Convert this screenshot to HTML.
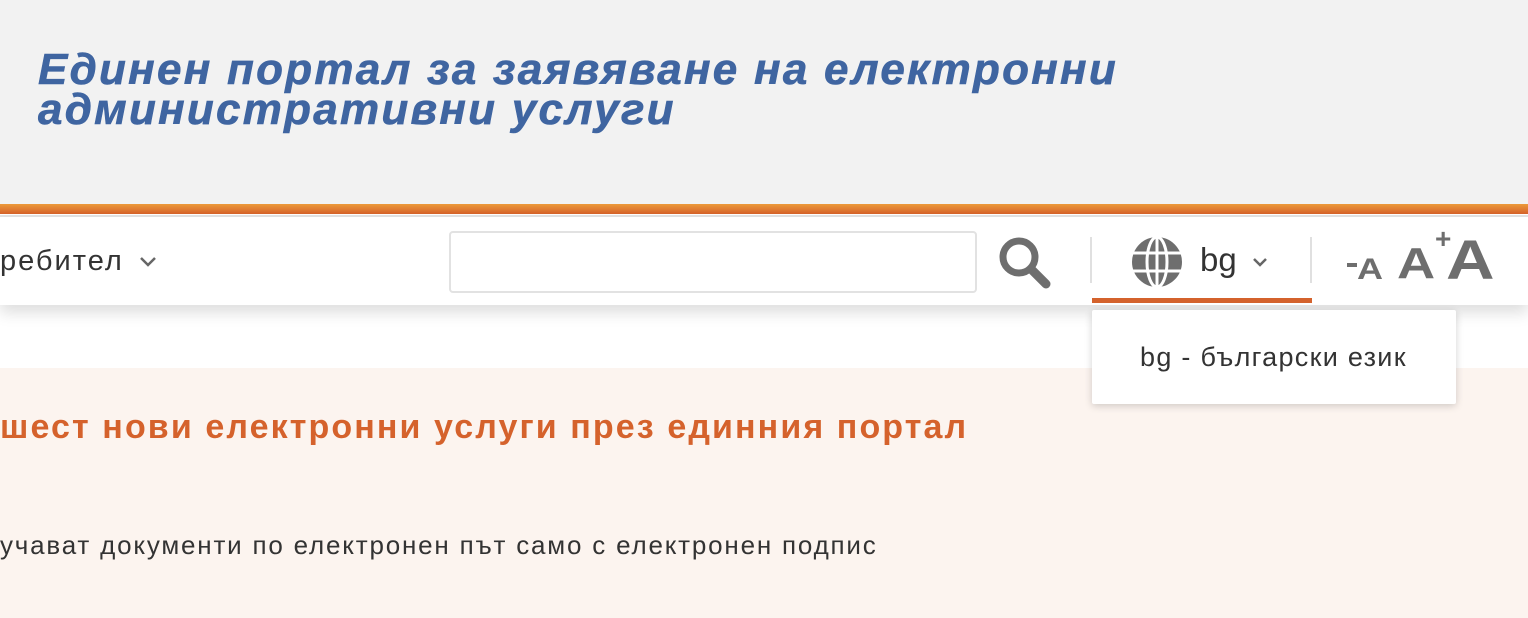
<!DOCTYPE html>
<html><head><meta charset="utf-8"><style>
*{margin:0;padding:0;box-sizing:border-box}
body{width:1528px;height:618px;overflow:hidden;background:#fff;font-family:"Liberation Sans","DejaVu Sans",sans-serif;position:relative}
.hdr{position:absolute;left:0;top:0;width:1528px;height:204px;background:#f2f2f2}
.title{position:absolute;left:38px;top:50px;color:#3f65a1;font-weight:bold;font-style:italic;font-size:44px;line-height:40px;letter-spacing:2.25px;white-space:nowrap;-webkit-text-stroke:0.6px #3f65a1}
.bar{position:absolute;left:0;top:204px;width:1528px;height:10px;background:linear-gradient(#ec9a3a,#d5622a)}
.line{position:absolute;left:0;top:215px;width:1528px;height:2px;background:#e3e3e3}
.nav{position:absolute;left:0;top:217px;width:1528px;height:88px;background:#fff;box-shadow:0 8px 14px rgba(0,0,0,0.13)}
.t{position:absolute;color:#333;white-space:nowrap}
.search{position:absolute;left:449px;top:231px;width:528px;height:62px;border:2px solid #e2e2e2;border-radius:4px;background:#fff}
.sep{position:absolute;width:2px;background:#e0e0e0}
.under{position:absolute;left:1092px;top:298px;width:220px;height:5px;background:#d4622c}
.drop{position:absolute;left:1092px;top:310px;width:364px;height:94px;background:#fff;box-shadow:0 2px 8px rgba(0,0,0,0.18);border-radius:2px}
.content{position:absolute;left:0;top:368px;width:1528px;height:250px;background:#fcf4ef}
.fa{position:absolute;font-weight:bold;color:#6e6e6e;transform-origin:left top;transform:scaleX(1.2)}
</style></head><body>
<div class="hdr"><div class="title">Единен портал за заявяване на електронни<br>административни услуги</div></div>
<div class="bar"></div><div class="line"></div>
<div class="content">
<div class="t" style="left:0;top:40px;font-size:34px;font-weight:bold;color:#d5622c;letter-spacing:2.1px">шест нови електронни услуги през единния портал</div>
<div class="t" style="left:0;top:162px;font-size:26px;color:#333;letter-spacing:1.8px">учават документи по електронен път само с електронен подпис</div>
</div>
<div class="nav">
<div class="t" style="left:0;top:28px;font-size:29px;letter-spacing:2px">ребител</div>
<svg style="position:absolute;left:139px;top:39px" width="18" height="12" viewBox="0 0 18 12"><path d="M2 2l7 7 7-7" stroke="#666" stroke-width="2.5" fill="none"/></svg>
<div class="sep" style="left:1090px;top:20px;height:46px"></div>
<div class="sep" style="left:1310px;top:20px;height:46px"></div>
<svg style="position:absolute;left:1131px;top:19px" width="52" height="52" viewBox="0 0 52 52"><circle cx="26" cy="26" r="25" fill="#6e6e6e"/><g stroke="#fff" stroke-width="3" fill="none"><ellipse cx="26" cy="26" rx="10" ry="25"/><line x1="26" y1="0" x2="26" y2="52"/><line x1="0" y1="17" x2="52" y2="17"/><line x1="0" y1="35" x2="52" y2="35"/></g></svg>
<div class="t" style="left:1200px;top:24px;font-size:33px;color:#333">bg</div>
<svg style="position:absolute;left:1252px;top:40px" width="16" height="11" viewBox="0 0 16 11"><path d="M2 2l6 6 6-6" stroke="#666" stroke-width="2.5" fill="none"/></svg>
<div style="position:absolute;left:1347px;top:46px;width:10px;height:4px;background:#6e6e6e"></div>
<div class="fa" style="left:1357px;top:36px;font-size:30px">A</div>
<div class="fa" style="left:1397px;top:22px;font-size:44px">A</div>
<div class="fa" style="left:1435px;top:6px;font-size:28px;transform:none">+</div>
<div class="fa" style="left:1446px;top:10px;font-size:56px">A</div>
</div>
<div class="search"></div>
<svg style="position:absolute;left:997px;top:235px" width="56" height="56" viewBox="0 0 56 56"><circle cx="22" cy="22" r="16" stroke="#6e6e6e" stroke-width="7" fill="none"/><line x1="34" y1="34" x2="49" y2="49" stroke="#6e6e6e" stroke-width="9" stroke-linecap="round"/></svg>
<div class="under"></div>
<div class="drop"><div class="t" style="left:48px;top:32px;font-size:27px;color:#333;letter-spacing:1.3px">bg - български език</div></div>
</body></html>
